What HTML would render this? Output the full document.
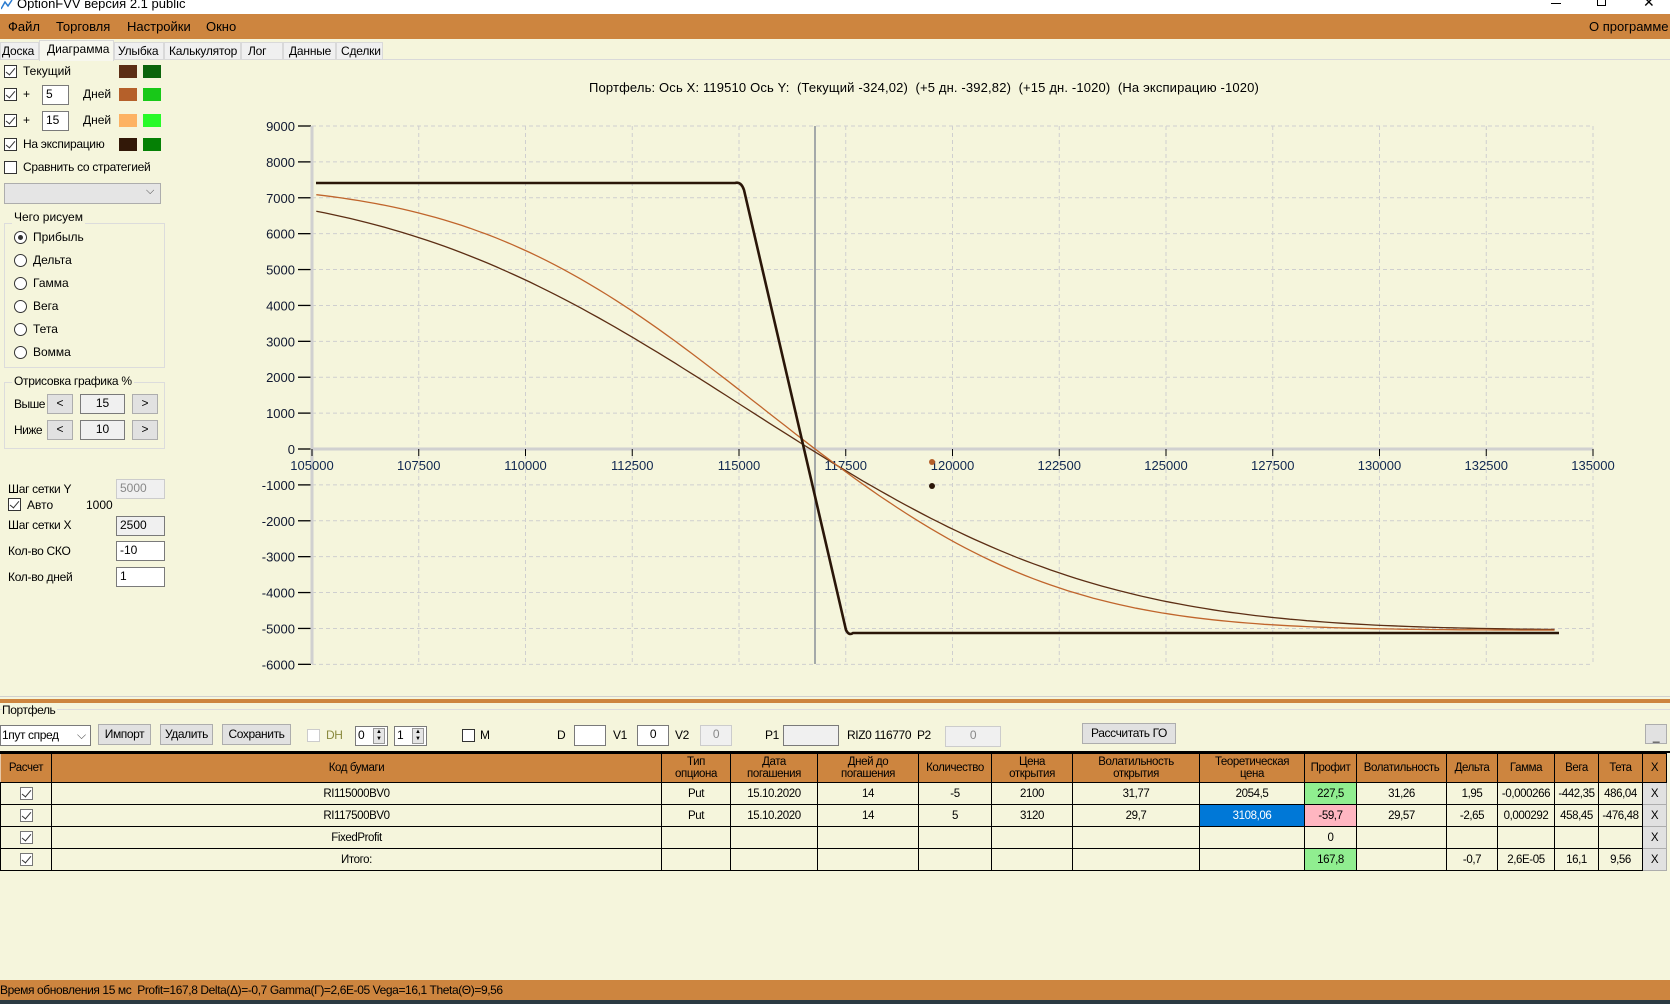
<!DOCTYPE html>
<html><head><meta charset="utf-8">
<style>
*{margin:0;padding:0;box-sizing:border-box}
body{width:1670px;height:1004px;background:#F5F5DC;font-family:"Liberation Sans",sans-serif;font-size:12px;color:#000;position:relative;overflow:hidden}
.a{position:absolute;white-space:nowrap}
.cb{position:absolute;width:13px;height:13px;border:1px solid #333;background:#fff}
.cb.c::after{content:"";position:absolute;left:3px;top:0px;width:4px;height:8px;border:solid #333;border-width:0 1.5px 1.5px 0;transform:rotate(40deg)}
.sw{position:absolute;width:18px;height:13px}
.inp{position:absolute;border:1px solid #7a7a7a;background:#fff;padding-left:3px;font-size:12px;line-height:17px}
.btn{position:absolute;border:1px solid #adadad;background:#e1e1e1;text-align:center;font-size:12px}
.rad{position:absolute;width:13px;height:13px;border:1px solid #333;border-radius:50%;background:#fff}
.grp{position:absolute;border:1px solid #dcdcdc}
.n{font-size:12px;letter-spacing:-0.4px}
.tab{position:absolute;top:42px;height:18px;background:#f0f0f0;border:1px solid #d9d9d9;font-size:12px;letter-spacing:-0.2px;line-height:16px;overflow:hidden}
table{border-collapse:collapse;position:absolute;left:0;top:753px;width:1667px;font-size:11.5px;letter-spacing:-0.4px}
td{border:1px solid #000;text-align:center;height:22px;padding:0}
th{background:#CD853F;font-weight:normal;border:1px solid #000;border-left-color:#e8c9a8;height:29px;line-height:12px;padding:0}
.x{background:#e1e1e1;border:1px solid #adadad}
</style></head><body>
<div class="a" style="left:0;top:0;width:1670px;height:14px;background:#fff"></div>
<svg class="a" style="left:1px;top:0" width="12" height="10"><path d="M0 9 L4 2 L7 6 L11 0" stroke="#2a7bd0" fill="none" stroke-width="1.5"/></svg>
<div class="a" style="left:17px;top:-4px;font-size:13px">OptionFVV версия 2.1 public</div>
<div class="a" style="left:1551px;top:3px;width:10px;height:1px;background:#000"></div>
<div class="a" style="left:1597px;top:-3px;width:9px;height:9px;border:1px solid #000"></div>
<div class="a" style="left:1643px;top:-6px;font-size:14px">✕</div>
<div class="a" style="left:0;top:14px;width:1670px;height:25px;background:#CD853F"></div>
<div class="a" style="left:8px;top:19px;font-size:13px">Файл</div>
<div class="a" style="left:56px;top:19px;font-size:13px">Торговля</div>
<div class="a" style="left:127px;top:19px;font-size:13px">Настройки</div>
<div class="a" style="left:206px;top:19px;font-size:13px">Окно</div>
<div class="a" style="left:1589px;top:19px;font-size:13px">О программе</div>
<div class="a" style="left:0;top:59px;width:1670px;height:1px;background:#d9d9d9"></div>
<div class="tab" style="left:0;width:39px;padding-left:1px">Доска</div>
<div class="a" style="left:39px;top:40px;width:75px;height:21px;border:1px solid #d9d9d9;border-bottom:none;font-size:12px;padding-left:7px;line-height:16px;background:#f7f7ee">Диаграмма</div>
<div class="tab" style="left:114px;width:50px;padding-left:3px">Улыбка</div>
<div class="tab" style="left:164px;width:77px;padding-left:4px">Калькулятор</div>
<div class="tab" style="left:241px;width:42px;padding-left:6px">Лог</div>
<div class="tab" style="left:283px;width:53px;padding-left:5px">Данные</div>
<div class="tab" style="left:336px;width:47px;padding-left:4px">Сделки</div>

<!-- left panel -->
<div class="cb c" style="left:4px;top:65px"></div><div class="a" style="left:23px;top:64px">Текущий</div>
<div class="sw" style="left:119px;top:65px;background:#5C2E14"></div><div class="sw" style="left:143px;top:65px;background:#0B640B"></div>
<div class="cb c" style="left:4px;top:88px"></div><div class="a" style="left:23px;top:87px">+</div>
<div class="inp" style="left:42px;top:85px;width:27px;height:20px">5</div><div class="a" style="left:83px;top:87px">Дней</div>
<div class="sw" style="left:119px;top:88px;background:#B5602A"></div><div class="sw" style="left:143px;top:88px;background:#18C818"></div>
<div class="cb c" style="left:4px;top:114px"></div><div class="a" style="left:23px;top:113px">+</div>
<div class="inp" style="left:42px;top:111px;width:27px;height:20px">15</div><div class="a" style="left:83px;top:113px">Дней</div>
<div class="sw" style="left:119px;top:114px;background:#FDB263"></div><div class="sw" style="left:143px;top:114px;background:#28FA28"></div>
<div class="cb c" style="left:4px;top:138px"></div><div class="a" style="left:23px;top:137px;letter-spacing:-0.3px">На экспирацию</div>
<div class="sw" style="left:119px;top:138px;background:#321808"></div><div class="sw" style="left:143px;top:138px;background:#058005"></div>
<div class="cb" style="left:4px;top:161px"></div><div class="a" style="left:23px;top:160px;letter-spacing:-0.3px">Сравнить со стратегией</div>
<div class="a" style="left:4px;top:183px;width:157px;height:21px;background:#e5e5e5;border:1px solid #adadad"></div>
<div class="a" style="left:146px;top:185px;font-size:11px;color:#444">⌵</div>
<div class="grp" style="left:4px;top:223px;width:161px;height:145px"></div>
<div class="a" style="left:12px;top:210px;background:#F5F5DC;padding:0 2px">Чего рисуем</div>
<div class="rad" style="left:14px;top:231px"></div><div class="a" style="left:18px;top:235px;width:5px;height:5px;border-radius:50%;background:#333"></div><div class="a" style="left:33px;top:230px">Прибыль</div>
<div class="rad" style="left:14px;top:254px"></div><div class="a" style="left:33px;top:253px">Дельта</div>
<div class="rad" style="left:14px;top:277px"></div><div class="a" style="left:33px;top:276px">Гамма</div>
<div class="rad" style="left:14px;top:300px"></div><div class="a" style="left:33px;top:299px">Вега</div>
<div class="rad" style="left:14px;top:323px"></div><div class="a" style="left:33px;top:322px">Тета</div>
<div class="rad" style="left:14px;top:346px"></div><div class="a" style="left:33px;top:345px">Вомма</div>
<div class="grp" style="left:4px;top:382px;width:161px;height:67px"></div>
<div class="a" style="left:12px;top:374px;background:#F5F5DC;padding:0 2px;letter-spacing:-0.3px">Отрисовка графика %</div>
<div class="a" style="left:14px;top:397px;letter-spacing:-0.5px">Выше</div>
<div class="btn" style="left:47px;top:394px;width:26px;height:20px;line-height:17px">&lt;</div>
<div class="inp" style="left:80px;top:394px;width:45px;height:20px;text-align:center;background:#f0f0f0;padding:0">15</div>
<div class="btn" style="left:132px;top:394px;width:26px;height:20px;line-height:17px">&gt;</div>
<div class="a" style="left:14px;top:423px;letter-spacing:-0.5px">Ниже</div>
<div class="btn" style="left:47px;top:420px;width:26px;height:20px;line-height:17px">&lt;</div>
<div class="inp" style="left:80px;top:420px;width:45px;height:20px;text-align:center;background:#f0f0f0;padding:0">10</div>
<div class="btn" style="left:132px;top:420px;width:26px;height:20px;line-height:17px">&gt;</div>
<div class="a" style="left:8px;top:482px;letter-spacing:-0.3px">Шаг сетки Y</div>
<div class="inp" style="left:116px;top:479px;width:49px;height:20px;background:#f0f0f0;color:#888;border-color:#ccc">5000</div>
<div class="cb c" style="left:8px;top:498px"></div><div class="a" style="left:27px;top:498px">Авто</div><div class="a" style="left:86px;top:498px">1000</div>
<div class="a" style="left:8px;top:518px;letter-spacing:-0.3px">Шаг сетки X</div>
<div class="inp" style="left:116px;top:516px;width:49px;height:20px;background:#f0f0f0">2500</div>
<div class="a" style="left:8px;top:544px;letter-spacing:-0.3px">Кол-во СКО</div>
<div class="inp" style="left:116px;top:541px;width:49px;height:20px">-10</div>
<div class="a" style="left:8px;top:570px;letter-spacing:-0.3px">Кол-во дней</div>
<div class="inp" style="left:116px;top:567px;width:49px;height:20px">1</div>

<div class="a" style="left:589px;top:80px;font-size:13px;letter-spacing:0.15px">Портфель: Ось X: 119510 Ось Y:&nbsp; (Текущий -324,02)&nbsp; (+5 дн. -392,82)&nbsp; (+15 дн. -1020)&nbsp; (На экспирацию -1020)</div>

<svg id="ch" class="a" style="left:0;top:0" width="1670" height="700" font-family="Liberation Sans, sans-serif" font-size="13"></svg>

<!-- bottom -->
<div class="a" style="left:0;top:696px;width:1670px;height:1px;background:#d0d0d0"></div>
<div class="a" style="left:0;top:699px;width:1670px;height:4px;background:#CD853F"></div>
<div class="a" style="left:0;top:709px;width:1670px;height:1px;background:#dcdcdc"></div>
<div class="a n" style="left:2px;top:703px;background:#F5F5DC;padding-right:2px">Портфель</div>
<div class="a n" style="left:0;top:725px;width:91px;height:21px;background:#fff;border:1px solid #7a7a7a;line-height:19px;padding-left:1px">1пут спред<span style="position:absolute;left:76px;color:#555">⌵</span></div>
<div class="btn n" style="left:98px;top:724px;width:53px;height:21px;line-height:19px">Импорт</div>
<div class="btn n" style="left:160px;top:724px;width:53px;height:21px;line-height:19px">Удалить</div>
<div class="btn n" style="left:222px;top:724px;width:69px;height:21px;line-height:19px">Сохранить</div>
<div class="cb" style="left:307px;top:729px;border-color:#ccc"></div><div class="a n" style="left:326px;top:728px;color:#8a8a40">DH</div>
<div class="inp n" style="left:355px;top:726px;width:33px;height:20px;padding-left:2px">0</div><div class="a" style="left:373px;top:728px;width:12px;height:16px;background:#e5e5e5;border:1px solid #999;font-size:6px;line-height:7px;text-align:center">▲<br>▼</div>
<div class="inp n" style="left:394px;top:726px;width:33px;height:20px;padding-left:2px">1</div><div class="a" style="left:412px;top:728px;width:12px;height:16px;background:#e5e5e5;border:1px solid #999;font-size:6px;line-height:7px;text-align:center">▲<br>▼</div>
<div class="cb" style="left:462px;top:729px"></div><div class="a n" style="left:480px;top:728px">M</div>
<div class="a n" style="left:557px;top:728px">D</div><div class="inp" style="left:574px;top:725px;width:32px;height:21px"></div>
<div class="a n" style="left:613px;top:728px">V1</div><div class="inp n" style="left:637px;top:725px;width:32px;height:21px;text-align:center;padding:0">0</div>
<div class="a n" style="left:675px;top:728px">V2</div><div class="inp n" style="left:700px;top:725px;width:32px;height:21px;text-align:center;padding:0;background:#f0f0f0;color:#888;border-color:#ccc">0</div>
<div class="a n" style="left:765px;top:728px">P1</div><div class="inp" style="left:783px;top:725px;width:56px;height:21px;background:#f0f0f0"></div>
<div class="a n" style="left:847px;top:728px">RIZ0 116770&nbsp; P2</div><div class="inp n" style="left:945px;top:726px;width:56px;height:21px;text-align:center;padding:0;background:#f0f0f0;color:#888;border-color:#ccc">0</div>
<div class="btn n" style="left:1082px;top:723px;width:94px;height:21px;line-height:19px">Рассчитать ГО</div>
<div class="btn n" style="left:1645px;top:724px;width:22px;height:20px;line-height:22px">_</div>
<div class="a" style="left:0;top:751px;width:1670px;height:2px;background:#000"></div>
<table>
<tr><th style="width:51px">Расчет</th><th style="width:610px">Код бумаги</th><th style="width:69px">Тип<br>опциона</th><th style="width:87px">Дата<br>погашения</th><th style="width:101px">Дней до<br>погашения</th><th style="width:73px">Количество</th><th style="width:81px">Цена<br>открытия</th><th style="width:127px">Волатильность<br>открытия</th><th style="width:105px">Теоретическая<br>цена</th><th style="width:52px">Профит</th><th style="width:90px">Волатильность</th><th style="width:51px">Дельта</th><th style="width:57px">Гамма</th><th style="width:44px">Вега</th><th style="width:44px">Тета</th><th>X</th></tr>
<tr><td><div class="cb c" style="position:relative;margin:auto;border-color:#777"></div></td><td>RI115000BV0</td><td>Put</td><td>15.10.2020</td><td>14</td><td>-5</td><td>2100</td><td>31,77</td><td>2054,5</td><td style="background:#90EE90">227,5</td><td>31,26</td><td>1,95</td><td>-0,000266</td><td>-442,35</td><td>486,04</td><td class="x">X</td></tr>
<tr><td><div class="cb c" style="position:relative;margin:auto;border-color:#777"></div></td><td>RI117500BV0</td><td>Put</td><td>15.10.2020</td><td>14</td><td>5</td><td>3120</td><td>29,7</td><td style="background:#0078D7;color:#fff">3108,06</td><td style="background:#FFB6C1">-59,7</td><td>29,57</td><td>-2,65</td><td>0,000292</td><td>458,45</td><td>-476,48</td><td class="x">X</td></tr>
<tr><td><div class="cb c" style="position:relative;margin:auto;border-color:#777"></div></td><td>FixedProfit</td><td></td><td></td><td></td><td></td><td></td><td></td><td></td><td>0</td><td></td><td></td><td></td><td></td><td></td><td class="x">X</td></tr>
<tr><td><div class="cb c" style="position:relative;margin:auto;border-color:#777"></div></td><td>Итого:</td><td></td><td></td><td></td><td></td><td></td><td></td><td></td><td style="background:#90EE90">167,8</td><td></td><td>-0,7</td><td>2,6E-05</td><td>16,1</td><td>9,56</td><td class="x">X</td></tr>
</table>
<div class="a" style="left:0;top:980px;width:1670px;height:20px;background:#CD853F"></div>
<div class="a n" style="left:0;top:983px">Время обновления 15 мс&nbsp; Profit=167,8 Delta(Δ)=-0,7 Gamma(Γ)=2,6E-05 Vega=16,1 Theta(Θ)=9,56</div>
<div class="a" style="left:0;top:1000px;width:1670px;height:4px;background:#2b3a42"></div>

<script>
(function(){
var s=document.getElementById('ch'),h='';
function X(v){return 312+(v-105000)/2500*106.75}
function Y(v){return 449-v*0.035889}
for(var i=0;i<=12;i++){var x=X(105000+i*2500);h+='<line x1="'+x+'" y1="126" x2="'+x+'" y2="664" stroke="#cfcfcf" stroke-dasharray="4,3"/>';}
for(var v=-6000;v<=9000;v+=1000){var y=Y(v);h+='<line x1="312" y1="'+y+'" x2="1593" y2="'+y+'" stroke="#cfcfcf" stroke-dasharray="4,3"/>';
h+='<line x1="298" y1="'+y+'" x2="311" y2="'+y+'" stroke="#000" stroke-width="1.3"/>';
h+='<text x="295" y="'+(y+5)+'" text-anchor="end" fill="#101830">'+v+'</text>';}
h+='<line x1="312" y1="449" x2="1593" y2="449" stroke="#d0d0d0" stroke-width="3"/>';
h+='<line x1="312" y1="126" x2="312" y2="664" stroke="#d0d0d0" stroke-width="3"/>';
for(var i=0;i<=12;i++){var x=X(105000+i*2500);h+='<line x1="'+x+'" y1="449" x2="'+x+'" y2="456" stroke="#000"/><text x="'+x+'" y="470" text-anchor="middle" fill="#102850">'+(105000+i*2500)+'</text>';}
h+='<line x1="815" y1="126" x2="815" y2="664" stroke="#8a9098" stroke-width="1.5"/>';
function erf(x){var t=1/(1+0.3275911*Math.abs(x));var y=1-(((((1.061405429*t-1.453152027)*t)+1.421413741)*t-0.284496736)*t+0.254829592)*t*Math.exp(-x*x);return x>=0?y:-y}
function P(a){return 0.5*(1+erf(a/Math.SQRT2))}
function curve(m,sd,col,w){var d='';for(var v=105100;v<=134200;v+=200){var f=7400-12450*P((v-m)/sd);d+=(d?'L':'M')+X(v).toFixed(1)+','+Y(f).toFixed(1);}return '<path d="'+d+'" fill="none" stroke="'+col+'" stroke-width="'+w+'"/>';}
h+=curve(115113,6512,'#5C2E14',1.3);
h+=curve(115513,5323,'#C0652C',1.3);
h+='<path d="M316,183 L735,183 Q741,181 744,190 L846,630 Q849,636 853,633 L1559,633" fill="none" stroke="#2a1608" stroke-width="2.6"/>';
h+='<circle cx="932" cy="462" r="3" fill="#B5602A"/><circle cx="932" cy="486" r="3" fill="#2a1608"/>';
s.innerHTML=h;})();
</script>
</body></html>
